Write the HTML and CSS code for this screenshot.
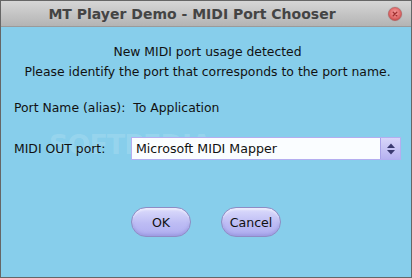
FILE: index.html
```html
<!DOCTYPE html>
<html>
<head>
<meta charset="utf-8">
<link rel="stylesheet" href="styles.css">
</head>
<body>
<div class="window">
  <div class="titlebar">
    <span class="title">MT Player Demo - MIDI Port Chooser</span>
    <span class="close">
      <svg width="16" height="16" viewBox="0 0 16 16">
        <defs>
          <radialGradient id="cg" cx="50%" cy="40%" r="60%">
            <stop offset="0" stop-color="#f6a0a0"/>
            <stop offset="0.7" stop-color="#e06868"/>
            <stop offset="1" stop-color="#c04848"/>
          </radialGradient>
        </defs>
        <circle cx="8" cy="8" r="7.5" fill="#a8a8a8" opacity="0.6"/>
        <circle cx="8" cy="8" r="6.5" fill="url(#cg)" stroke="#b85050" stroke-width="0.6"/>
        <path d="M6.2 6.2 L9.8 9.8 M9.8 6.2 L6.2 9.8" stroke="#a03030" stroke-width="1.3" stroke-linecap="round"/>
      </svg>
    </span>
  </div>
  <div class="content">
    <span class="watermark">SOFTPEDIA</span>
    <p class="msg">New MIDI port usage detected</p>
    <p class="msg">Please identify the port that corresponds to the port name.</p>
    <p class="portname">Port Name (alias):&nbsp; To Application</p>
    <div class="row">
      <span class="label">MIDI OUT port:</span>
      <div class="select">
        <span class="value">Microsoft MIDI Mapper</span>
        <span class="arrow">
          <svg width="10" height="14" viewBox="0 0 10 14">
            <path d="M5 1.5 L9 6 L1 6 Z" fill="#3a3a70"/>
            <path d="M5 12.5 L9 8 L1 8 Z" fill="#3a3a70"/>
          </svg>
        </span>
      </div>
    </div>
    <div class="buttons">
      <button class="btn">OK</button>
      <button class="btn">Cancel</button>
    </div>
  </div>
</div>
</body>
</html>
```
FILE: styles.css
```css
html, body {
  margin: 0;
  padding: 0;
}
body {
  font-family: "DejaVu Sans", Verdana, sans-serif;
  font-size: 12.4px;
  color: #111;
}
.window {
  width: 412px;
  height: 278px;
  box-sizing: border-box;
  border: 1px solid #666;
  background: #87ceeb;
  display: flex;
  flex-direction: column;
  overflow: hidden;
}
.titlebar {
  height: 26px;
  flex: none;
  background: linear-gradient(#d6d6d6, #b4b4b4);
  border-bottom: 1px solid #9a9a9a;
  box-sizing: border-box;
  position: relative;
  display: flex;
  align-items: center;
  justify-content: center;
  padding-right: 28px;
}
.title {
  font-weight: bold;
  font-size: 14px;
  color: #444;
}
.close {
  position: absolute;
  right: 8px;
  top: 5px;
  width: 16px;
  height: 16px;
  display: block;
}
.close svg {
  display: block;
}
.content {
  flex: 1;
  position: relative;
  padding: 15px 10px 0 13px;
}
.msg {
  position: relative;
  margin: 0;
  line-height: 20px;
  text-align: center;
}
.portname {
  position: relative;
  margin: 16px 0 0 0;
  line-height: 20px;
}
.row {
  position: relative;
  display: flex;
  align-items: center;
  margin-top: 19px;
  height: 23px;
}
.label {
  width: 117px;
  flex: none;
}
.select {
  width: 270px;
  height: 23px;
  box-sizing: border-box;
  border: 1px solid #b4aef0;
  background: rgba(255, 255, 255, 0.96);
  display: flex;
  align-items: stretch;
}
.value {
  flex: 1;
  padding-left: 4px;
  line-height: 21px;
  font-size: 12.6px;
}
.arrow {
  width: 19px;
  flex: none;
  background: linear-gradient(#d8d6fa, #b6b2f0);
  border-left: 1px solid #a8a2e8;
  display: flex;
  align-items: center;
  justify-content: center;
}
.arrow svg {
  display: block;
}
.buttons {
  display: flex;
  justify-content: center;
  gap: 30px;
  margin-top: 47px;
  margin-left: -3px;
}
.btn {
  width: 60px;
  height: 30px;
  border-radius: 15px;
  border: 1px solid #8e8cc4;
  background: linear-gradient(#dcdcfc, #bdbcf4 55%, #b0aef0);
  box-shadow: inset 0 -2px 3px rgba(120, 118, 200, 0.35), inset 0 2px 2px rgba(255, 255, 255, 0.5);
  font-family: "DejaVu Sans", Verdana, sans-serif;
  font-size: 12.6px;
  color: #111;
  padding: 0;
}
.watermark {
  position: absolute;
  left: 48px;
  top: 103px;
  font-family: "DejaVu Sans", sans-serif;
  font-weight: bold;
  font-size: 27px;
  letter-spacing: -1px;
  line-height: 30px;
  color: rgba(255, 255, 255, 0.14);
  pointer-events: none;
}
```
